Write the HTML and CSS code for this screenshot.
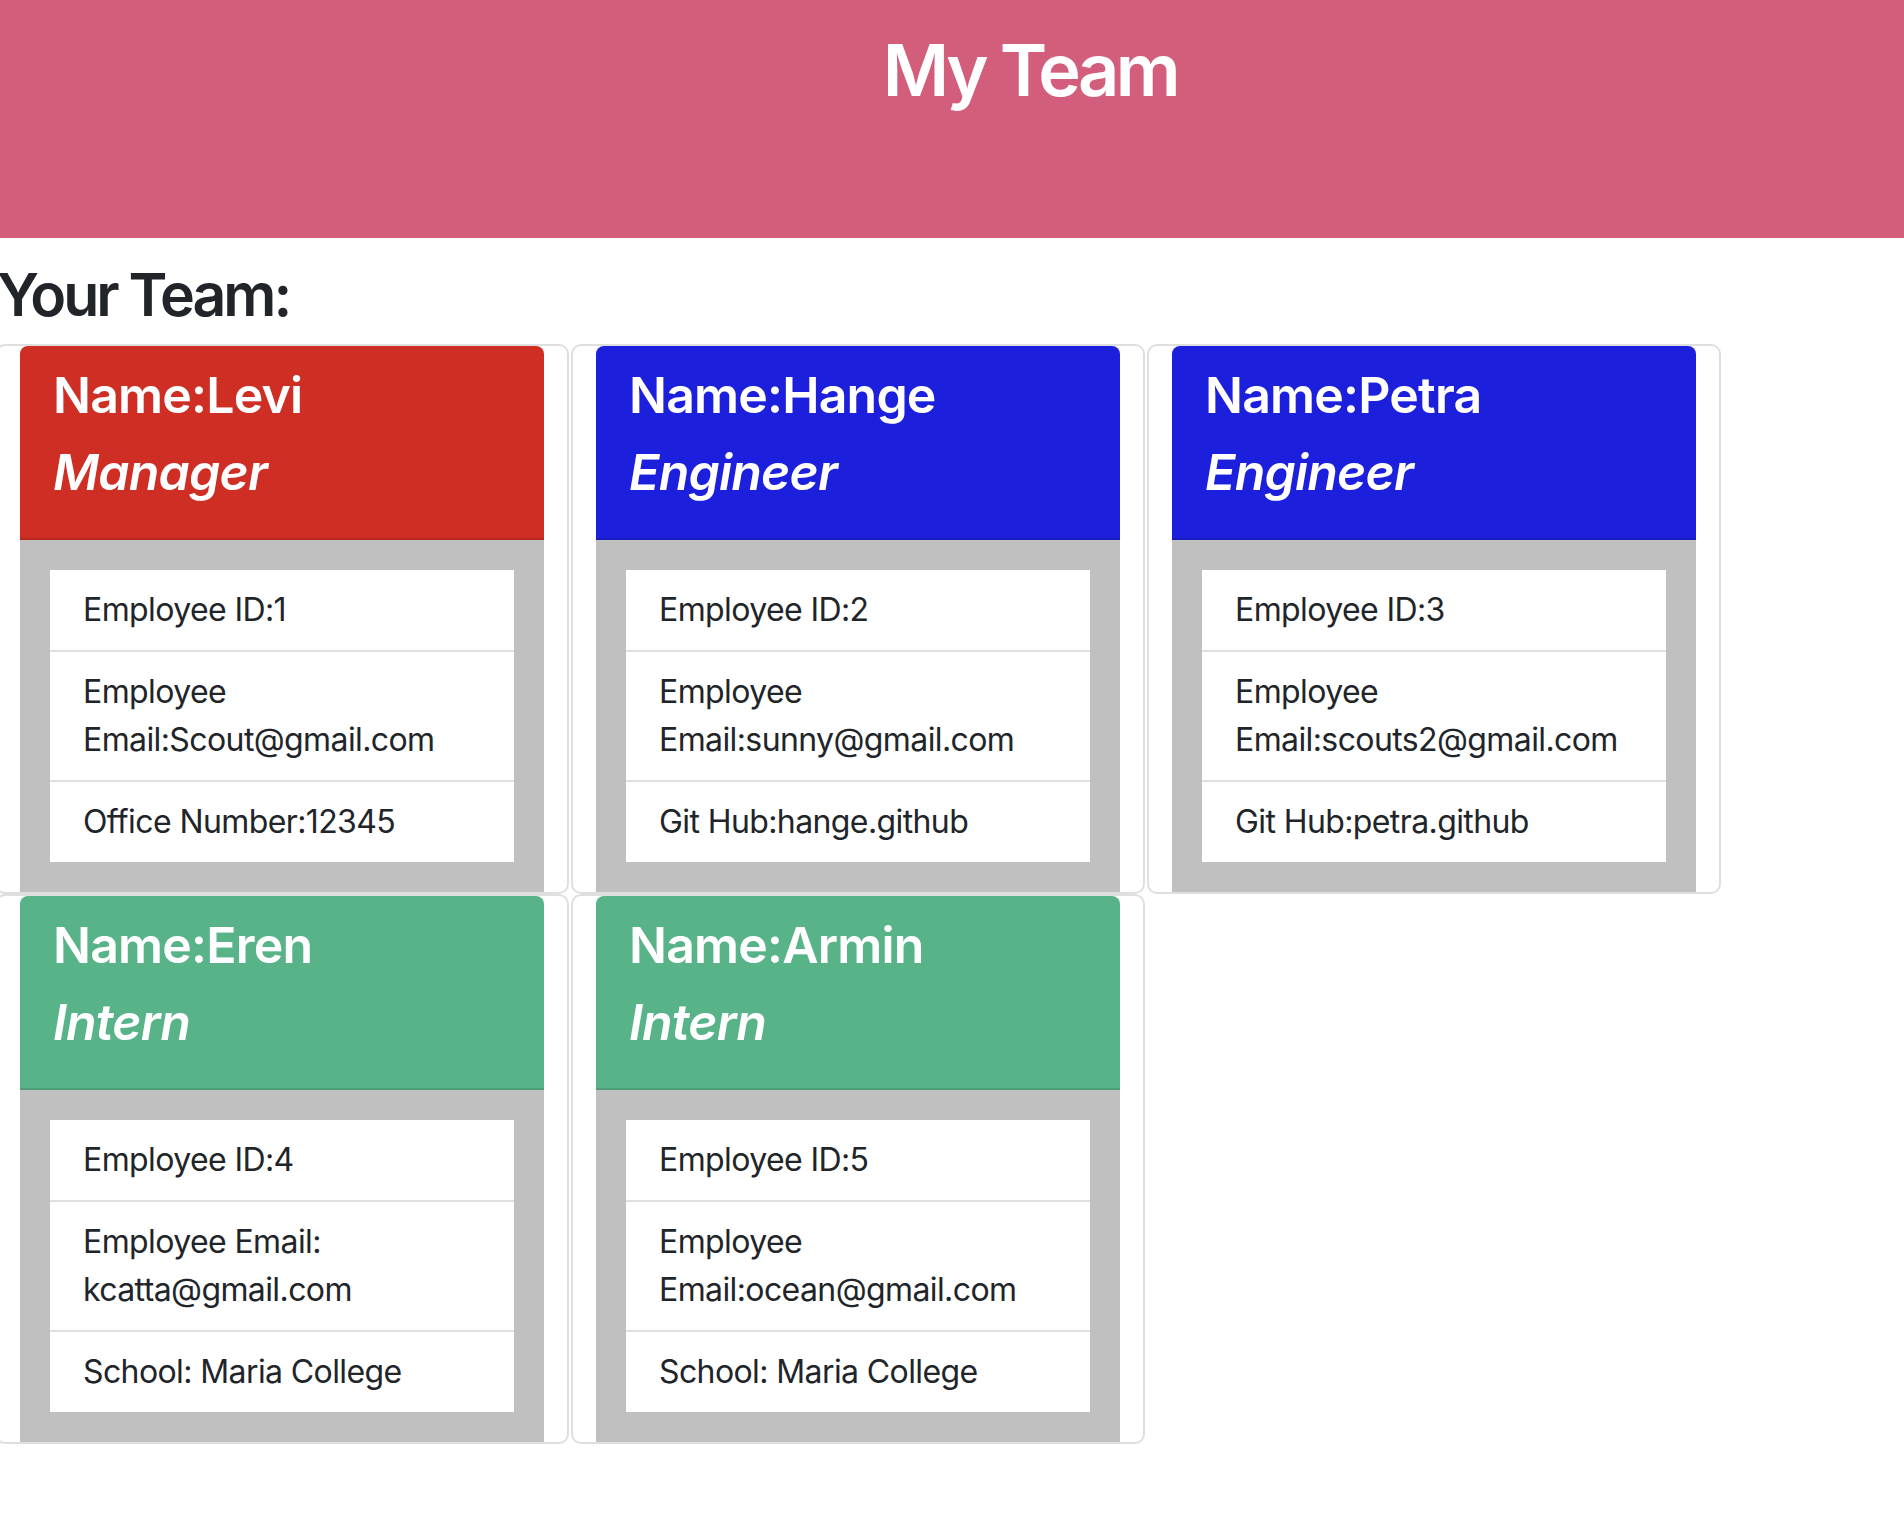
FILE: index.html
```html
<!DOCTYPE html>
<html lang="en">
<head>
<meta charset="utf-8">
<title>My Team</title>
<link rel="stylesheet" href="styles.css">
</head>
<body>
<header class="banner">
  <h1 class="banner-title">My Team</h1>
</header>
<main class="team">
  <h2 class="team-title">Your Team:</h2>
  <div class="grid">
    <div class="slot">
      <div class="card">
        <div class="card-head manager">
          <h3 class="name">Name:Levi</h3>
          <h3 class="role">Manager</h3>
        </div>
        <div class="card-body">
          <ul class="info">
            <li>Employee ID:1</li>
            <li>Employee Email:Scout@gmail.com</li>
            <li>Office Number:12345</li>
          </ul>
        </div>
      </div>
    </div>
    <div class="slot">
      <div class="card">
        <div class="card-head engineer">
          <h3 class="name">Name:Hange</h3>
          <h3 class="role">Engineer</h3>
        </div>
        <div class="card-body">
          <ul class="info">
            <li>Employee ID:2</li>
            <li>Employee Email:sunny@gmail.com</li>
            <li>Git Hub:hange.github</li>
          </ul>
        </div>
      </div>
    </div>
    <div class="slot">
      <div class="card">
        <div class="card-head engineer">
          <h3 class="name">Name:Petra</h3>
          <h3 class="role">Engineer</h3>
        </div>
        <div class="card-body">
          <ul class="info">
            <li>Employee ID:3</li>
            <li>Employee Email:scouts2@gmail.com</li>
            <li>Git Hub:petra.github</li>
          </ul>
        </div>
      </div>
    </div>
    <div class="slot">
      <div class="card">
        <div class="card-head intern">
          <h3 class="name">Name:Eren</h3>
          <h3 class="role">Intern</h3>
        </div>
        <div class="card-body">
          <ul class="info">
            <li>Employee ID:4</li>
            <li>Employee Email: kcatta@gmail.com</li>
            <li>School: Maria College</li>
          </ul>
        </div>
      </div>
    </div>
    <div class="slot">
      <div class="card">
        <div class="card-head intern">
          <h3 class="name">Name:Armin</h3>
          <h3 class="role">Intern</h3>
        </div>
        <div class="card-body">
          <ul class="info">
            <li>Employee ID:5</li>
            <li>Employee Email:ocean@gmail.com</li>
            <li>School: Maria College</li>
          </ul>
        </div>
      </div>
    </div>
  </div>
</main>
</body>
</html>
```
FILE: styles.css
```css
* { box-sizing: border-box; }
html, body { margin: 0; padding: 0; background: #fff; }
body {
  font-family: Inter, "Noto Sans", "Liberation Sans", sans-serif;
  color: #212529;
  font-size: 32px;
  line-height: 48px;
  letter-spacing: -0.6px;
  overflow: hidden;
}
.banner {
  height: 238px;
  background: #d35e7c;
  padding: 27px 0 0 156px;
}
.banner-title {
  margin: 0;
  text-align: center;
  color: #fff;
  font-size: 72px;
  line-height: 86px;
  font-weight: 600;
  letter-spacing: -3.5px;
}
.team { margin-left: -5px; }
.team-title {
  margin: 21px 0 14px 2px;
  font-size: 59px;
  line-height: 71px;
  font-weight: 600;
  letter-spacing: -3px;
}
.grid {
  display: flex;
  flex-wrap: wrap;
  column-gap: 2px;
  width: 1726px;
}
.slot {
  width: 574px;
  border: 2px solid #dfdfdf;
  border-radius: 10px;
  padding: 0 23px;
}
.card {
  border-radius: 8px 8px 0 0;
  overflow: hidden;
}
.card-head {
  height: 194px;
  padding: 19px 33px 0 33px;
  color: #fff;
  border-bottom: 2px solid rgba(0,0,0,0.125);
}
.card-head.manager { background: #ce2e24; }
.card-head.engineer { background: #1c20dc; }
.card-head.intern { background: #58b488; }
.name, .role {
  margin: 0;
  font-size: 50px;
  line-height: 60px;
  font-weight: 600;
  letter-spacing: -0.8px;
}
.name { margin-bottom: 17px; }
.role { font-style: italic; }
.card-body {
  background: #c0c0c0;
  padding: 30px;
}
.info {
  list-style: none;
  margin: 0;
  padding: 0;
  background: #fff;
}
.info li {
  padding: 16px 30px 16px 33px;
}
.info li + li { border-top: 2px solid #e0e0e0; }
```
